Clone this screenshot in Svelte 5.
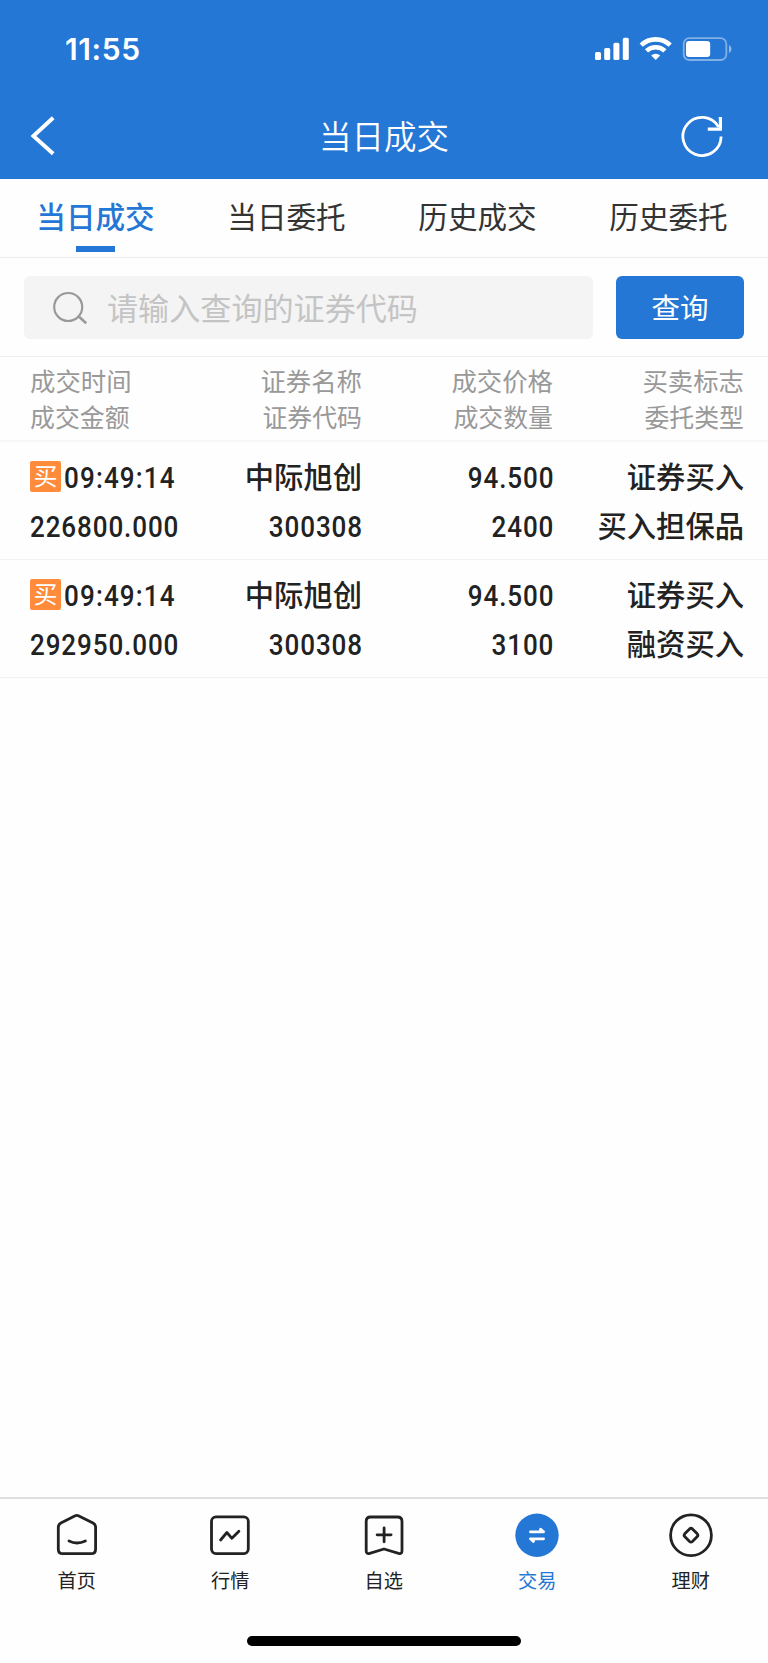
<script>
  let activeTab = 0;
  let activeNav = 3;
  let keyword = '';

  const tabs = ['当日成交', '当日委托', '历史成交', '历史委托'];

  const columns = [
    ['成交时间', '成交金额'],
    ['证券名称', '证券代码'],
    ['成交价格', '成交数量'],
    ['买卖标志', '委托类型']
  ];

  const deals = [
    {
      time: '09:49:14',
      amount: '226800.000',
      name: '中际旭创',
      code: '300308',
      price: '94.500',
      count: '2400',
      flag: '证券买入',
      type: '买入担保品'
    },
    {
      time: '09:49:14',
      amount: '292950.000',
      name: '中际旭创',
      code: '300308',
      price: '94.500',
      count: '3100',
      flag: '证券买入',
      type: '融资买入'
    }
  ];

  const nav = ['首页', '行情', '自选', '交易', '理财'];
</script>

<div class="app">
  <header>
    <div class="status">
      <span class="clock">11:55</span>
      <svg class="signals" width="138" height="26" viewBox="0 0 138 26" fill="#fff">
        <rect x="0" y="15" width="6" height="8" rx="1.6" />
        <rect x="9.2" y="11" width="6" height="12" rx="1.6" />
        <rect x="18.4" y="5.8" width="6" height="17.2" rx="1.6" />
        <rect x="27.8" y="0.8" width="6" height="22.2" rx="1.6" />
        <g fill="none" stroke="#fff" stroke-width="4.6">
          <path d="M46.2 8.2a21 21 0 0 1 29 0" />
          <path d="M51.5 13.9a13.4 13.4 0 0 1 18.4 0" />
        </g>
        <path d="M60.7 23l-4.5-4.5a6.6 6.6 0 0 1 9 0z" />
        <rect x="88.7" y="1.2" width="42.6" height="21.8" rx="5.6" fill="none" stroke="#fff" stroke-opacity="0.42" stroke-width="1.8" />
        <rect x="91" y="4" width="24.2" height="16" rx="3.2" />
        <path d="M134 8.3c3.2 1.2 3.2 6.4 0 7.6z" fill-opacity="0.5" />
      </svg>
    </div>
    <div class="titlebar">
      <button class="back" aria-label="返回">
        <svg width="28" height="42" viewBox="0 0 28 42" fill="none" stroke="#fff" stroke-width="3.9">
          <path d="M24.2 2.8L4.4 21l19.8 17.8" />
        </svg>
      </button>
      <h1>当日成交</h1>
      <button class="refresh" aria-label="刷新">
        <svg width="44" height="44" viewBox="0 0 44 44" fill="none" stroke="#fff" stroke-width="2.8">
          <path d="M41.1 22.6A19.1 19.1 0 1 1 38.6 13" />
          <path d="M40.4 3v12.2H27.8" stroke-width="3.2" />
        </svg>
      </button>
    </div>
  </header>

  <nav class="tabs">
    {#each tabs as tab, i}
      <button class="tab" class:active={i === activeTab} on:click={() => (activeTab = i)}>{tab}</button>
    {/each}
  </nav>

  <div class="search">
    <label class="field">
      <svg width="36" height="36" viewBox="0 0 36 36" fill="none" stroke="#999" stroke-width="2.2">
        <circle cx="15.2" cy="17" r="14" />
        <path d="M25.2 26l8 7.2" stroke-width="2.6" />
      </svg>
      <input placeholder="请输入查询的证券代码" bind:value={keyword} />
    </label>
    <button class="query">查询</button>
  </div>

  <div class="row head">
    {#each columns as [top, bottom]}
      <div class="cell">
        <span>{top}</span>
        <span class="small">{bottom}</span>
      </div>
    {/each}
  </div>

  {#each deals as deal}
    <div class="row deal">
      <div class="cell">
        <div class="time">
          <i class="badge">买</i>
          <span class="num">{deal.time}</span>
        </div>
        <span class="num">{deal.amount}</span>
      </div>
      <div class="cell">
        <span class="text">{deal.name}</span>
        <span class="num">{deal.code}</span>
      </div>
      <div class="cell">
        <span class="num">{deal.price}</span>
        <span class="num">{deal.count}</span>
      </div>
      <div class="cell">
        <span class="text">{deal.flag}</span>
        <span class="text">{deal.type}</span>
      </div>
    </div>
  {/each}

  <footer>
    <div class="bottom">
      {#each nav as label, i}
        <button class="item" class:active={i === activeNav} on:click={() => (activeNav = i)}>
          <svg width="48" height="48" viewBox="0 0 48 48" fill="none" stroke="currentColor" stroke-width="2.8" stroke-linecap="round" stroke-linejoin="round">
            {#if i === 0}
              <path d="M22.2 4.8q1.6-.8 3.2 0L40 12q2.6 1.4 2.6 4.2v22q0 4.5-4.5 4.5H9.8q-4.5 0-4.5-4.5v-22q0-2.8 2.6-4.2z" />
              <path d="M16 30q7.8 4 16.4 0" />
            {:else if i === 1}
              <rect x="5.5" y="5.8" width="36.8" height="36.8" rx="4.5" />
              <path d="M14.6 29l6.3-7.5 5 5.8 7-7" />
            {:else if i === 2}
              <path d="M10.5 6h27q4.5 0 4.5 4.5v29.2q0 3.6-3.4 2.6L24 38 9.7 42.3q-3.5 1-3.5-2.6V10.5Q6.2 6 10.5 6z" />
              <path d="M24.1 16.8v14M17.1 23.8h14" />
            {:else if i === 3}
              <circle cx="24" cy="24.2" r="21.7" fill="currentColor" stroke="none" />
              <g stroke="#fff" fill="#fff" stroke-width="2.8">
                <path d="M17.4 20.8h13.2l-3-2.6v2.6" />
                <path d="M30.6 27.8H17.4l3 2.6v-2.6" />
              </g>
            {:else}
              <circle cx="24" cy="24.2" r="20.4" />
              <path d="M22.6 17.9q1.4-1.2 2.8 0l4.9 4.9q1.2 1.4 0 2.8l-4.9 4.9q-1.4 1.2-2.8 0l-4.9-4.9q-1.2-1.4 0-2.8z" />
            {/if}
          </svg>
          <span>{label}</span>
        </button>
      {/each}
    </div>
    <div class="home-bar"></div>
  </footer>
</div>

<style>
  :global(body) {
    margin: 0;
    background: #fff;
  }
  .app {
    display: flex;
    flex-direction: column;
    width: 768px;
    height: 1663px;
    background: #fefefe;
    color: #222;
    font-family: 'Noto Sans CJK SC', sans-serif;
  }
  button {
    border: 0;
    padding: 0;
    background: none;
    font: inherit;
    color: inherit;
  }
  svg {
    display: block;
    flex: none;
  }
  header {
    height: 179px;
    box-sizing: border-box;
    background: #2577d5;
    color: #fff;
  }
  .status {
    display: flex;
    justify-content: space-between;
    align-items: center;
    height: 98px;
    padding: 0 35px 0 65px;
  }
  .signals {
    margin-top: 2px;
  }
  .clock {
    font: 600 30px/30px Inter, sans-serif;
    letter-spacing: 0.6px;
  }
  .titlebar {
    display: grid;
    grid-template-columns: 96px 1fr 96px;
    align-items: center;
    height: 76px;
  }
  .back {
    padding-left: 29px;
  }
  .refresh {
    padding-left: 8px;
  }
  h1 {
    margin: 0;
    padding-bottom: 3px;
    font-size: 32.5px;
    line-height: 48px;
    font-weight: 350;
    text-align: center;
  }
  .tabs {
    display: grid;
    grid-template-columns: repeat(4, 191px);
    height: 78px;
    border-bottom: 1px solid #ececec;
  }
  .tab {
    display: flex;
    flex-direction: column;
    align-items: center;
    padding-top: 15px;
    font-size: 29.6px;
    line-height: 44px;
    color: #333;
  }
  .active.tab {
    color: #2577d5;
    font-weight: 500;
  }
  .active.tab::after {
    content: '';
    width: 39px;
    height: 6px;
    margin-top: 8px;
    background: #2577d5;
  }
  .search {
    display: flex;
    gap: 23px;
    height: 63px;
    padding: 18px 24px 17px;
  }
  .field {
    display: flex;
    align-items: center;
    gap: 18px;
    width: 540px;
    padding-left: 29px;
    border-radius: 6px;
    background: #f4f4f4;
  }
  input {
    flex: 1;
    min-width: 0;
    height: 50px;
    padding: 0 0 2px;
    border: 0;
    outline: 0;
    background: none;
    font-family: inherit;
    font-size: 31.1px;
    font-weight: 400;
  }
  input::placeholder {
    color: #c4c4c4;
    opacity: 1;
  }
  .query {
    width: 128px;
    padding-bottom: 2px;
    border-radius: 6px;
    background: #2577d5;
    color: #fff;
    font-size: 28.5px;
  }
  .row {
    display: grid;
    grid-template-columns: 171px 161px 191px 191px;
    padding: 0 24px 0 30px;
    border-bottom: 1px solid #f2f2f2;
  }
  .cell {
    display: flex;
    flex-direction: column;
    align-items: flex-end;
    white-space: nowrap;
  }
  .cell:first-child {
    align-items: flex-start;
  }
  .head {
    height: 78px;
    padding-top: 5px;
    border-top: 1px solid #f0f0f0;
    border-bottom: 2px solid #f7f7f7;
    color: #999;
    font-size: 25.4px;
    line-height: 36px;
  }
  .small {
    font-size: 24.9px;
  }
  .deal {
    height: 105px;
    padding-top: 12px;
    font-size: 29.3px;
    line-height: 49px;
    font-weight: 500;
  }
  .text {
    height: 47px;
    margin-bottom: 2px;
    line-height: 43px;
  }
  /* narrow figures, squeezed towards the aligned edge */
  .num {
    margin-right: -1px;
    font-family: Roboto, sans-serif;
    font-size: 29.6px;
    line-height: 49px;
    letter-spacing: 1px;
    transform: scaleX(0.88);
    transform-origin: right;
  }
  .cell:first-child .num {
    transform-origin: left;
  }
  .time {
    display: flex;
    gap: 3px;
  }
  .time .num {
    letter-spacing: 1.3px;
  }
  .badge {
    width: 31px;
    height: 31px;
    margin-top: 7px;
    border-radius: 2px;
    background: #ff8b3b;
    color: #fff;
    font: 400 24px/28px 'Noto Sans CJK SC', sans-serif;
    text-align: center;
  }
  footer {
    height: 164px;
    margin-top: auto;
    border-top: 2px solid #dfdfdf;
  }
  .bottom {
    display: grid;
    grid-template-columns: repeat(5, 153.5px);
    height: 137px;
  }
  .item {
    display: flex;
    flex-direction: column;
    align-items: center;
    padding-top: 12px;
    font-size: 19.2px;
    line-height: 28px;
  }
  .item span {
    margin-top: 7px;
  }
  .active.item {
    color: #2577d5;
  }
  .home-bar {
    width: 274px;
    height: 10px;
    margin: 0 auto;
    border-radius: 5px;
    background: #000;
  }
</style>
